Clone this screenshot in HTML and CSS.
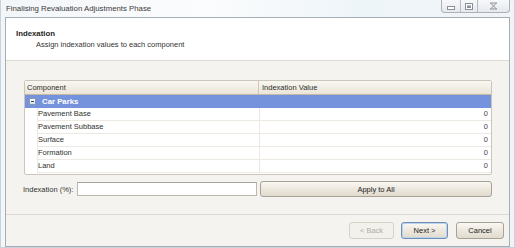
FILE: index.html
```html
<!DOCTYPE html>
<html>
<head>
<meta charset="utf-8">
<link rel="stylesheet" href="styles.css">
</head>
<body>
<div class="window">
  <div class="titlebar">
    <span class="title">Finalising Revaluation Adjustments Phase</span>
    <div class="caption-btns">
      <div class="cb cb-min"><svg width="8" height="4" viewBox="0 0 8 4"><rect x="0.5" y="0.5" width="7" height="3" fill="#fff" stroke="#8a9099"/></svg></div>
      <div class="cb cb-max"><svg width="8" height="7" viewBox="0 0 8 7"><rect x="0.5" y="0.5" width="7" height="6" fill="#fff" stroke="#8a9099"/><rect x="2" y="2.5" width="4" height="2.5" fill="#8a9099"/></svg></div>
      <div class="cb cb-close"><svg width="9" height="8" viewBox="0 0 9 8"><path d="M1 1 H8 M1.5 1 L4.5 4 L7.5 1 M4.5 4 L1.5 7 M4.5 4 L7.5 7 M1 7 H8" fill="none" stroke="#8a9099" stroke-width="1"/></svg></div>
    </div>
  </div>
  <div class="client">
    <div class="header">
      <div class="h-title">Indexation</div>
      <div class="h-sub">Assign indexation values to each component</div>
    </div>
    <div class="content">
      <div class="grid">
        <div class="grid-head">
          <div class="col-a">Component</div>
          <div class="col-b">Indexation Value</div>
        </div>
        <div class="group-row">
          <span class="toggle"><span class="toggle-minus"></span></span>
          <span class="group-name">Car Parks</span>
        </div>
        <div class="rows">
          <div class="row"><div class="cell-a">Pavement Base</div><div class="cell-b">0</div></div>
          <div class="row"><div class="cell-a">Pavement Subbase</div><div class="cell-b">0</div></div>
          <div class="row"><div class="cell-a">Surface</div><div class="cell-b">0</div></div>
          <div class="row"><div class="cell-a">Formation</div><div class="cell-b">0</div></div>
          <div class="row"><div class="cell-a">Land</div><div class="cell-b">0</div></div>
        </div>
      </div>
      <div class="form-row">
        <label class="lbl">Indexation (%):</label>
        <div class="input"></div>
        <button class="btn btn-apply">Apply to All</button>
      </div>
    </div>
    <div class="footer">
      <button class="btn btn-nav btn-disabled">&lt; Back</button>
      <button class="btn btn-nav btn-default">Next &gt;</button>
      <button class="btn btn-nav btn-cancel">Cancel</button>
    </div>
  </div>
</div>
</body>
</html>
```
FILE: styles.css
```css
* { box-sizing: border-box; }
html, body { margin: 0; padding: 0; }
body {
  width: 515px;
  height: 248px;
  overflow: hidden;
  font-family: "Liberation Sans", Arial, sans-serif;
  font-size: 7.5px;
  color: #2f2f2f;
  background: #eef2f6;
}
.window {
  width: 515px;
  height: 248px;
  display: flex;
  flex-direction: column;
  padding: 0 4px 2px 4px;
  background: linear-gradient(90deg, #f3f6f9 0%, #fbfcfd 40%, #eef5f9 70%, #f1f4f7 100%);
  border: 1px solid #c9d2da;
  border-top: none;
}
.titlebar {
  height: 17px;
  display: flex;
  align-items: flex-start;
  justify-content: space-between;
  flex-shrink: 0;
}
.title {
  margin-top: 4px;
  margin-left: 1px;
  font-size: 7.8px;
  color: #3a3a3a;
}
.caption-btns {
  display: flex;
  height: 13px;
  border: 1px solid #a9b1ba;
  border-top: none;
  border-radius: 0 0 4px 4px;
  background: linear-gradient(#f7f8fa, #e6e9ed);
  overflow: hidden;
}
.cb {
  display: flex;
  align-items: center;
  justify-content: center;
}
.cb-min { width: 19px; border-right: 1px solid #b6bcc4; padding-top: 4px; }
.cb-max { width: 17px; border-right: 1px solid #b6bcc4; }
.cb-close { width: 31px; }
.client {
  flex: 1;
  display: flex;
  flex-direction: column;
  border: 1px solid #a7adb4;
  background: #f5f3ef;
}
.header {
  height: 43px;
  background: #fff;
  border-bottom: 1px solid #dcd9d2;
  padding: 11px 0 0 10px;
  flex-shrink: 0;
}
.h-title {
  font-weight: bold;
  font-size: 7.8px;
  color: #1e1e1e;
  line-height: 10px;
}
.h-sub {
  margin-top: 1px;
  margin-left: 20px;
  line-height: 10px;
  color: #333;
}
.content {
  flex: 1;
  padding: 19px 17px 0 18px;
}
.grid {
  border: 1px solid #cbc6bc;
  border-radius: 2px;
  background: #fff;
  height: 95px;
}
.grid-head {
  display: flex;
  height: 14px;
  background: linear-gradient(#f9f7f2, #ebe5d8);
  border-bottom: 1px solid #c2b9a6;
  line-height: 13px;
}
.col-a {
  width: 234px;
  padding-left: 2px;
  border-right: 1px solid #cfc6b4;
}
.col-b { flex: 1; padding-left: 3px; }
.group-row {
  height: 13px;
  background: #7592dc;
  display: flex;
  align-items: center;
  padding-left: 4px;
}
.toggle {
  width: 7px;
  height: 7px;
  border: 1px solid #8c98ad;
  background: linear-gradient(#ffffff, #d8dde6);
  display: flex;
  align-items: center;
  justify-content: center;
}
.toggle-minus {
  width: 3px;
  height: 1px;
  background: #3a4a6a;
}
.group-name {
  color: #fff;
  font-weight: bold;
  margin-left: 6px;
  font-size: 7.8px;
}
.rows { padding-left: 12px; }
.row {
  display: flex;
  height: 13px;
  line-height: 12px;
  border-bottom: 1px solid #ede9e2;
  border-left: 1px solid #ede9e2;
}
.cell-a {
  width: 222px;
  padding-left: 0;
  border-right: 1px solid #ede9e2;
}
.cell-b {
  flex: 1;
  text-align: right;
  padding-right: 3px;
  color: #444;
}
.form-row {
  display: flex;
  align-items: center;
  margin-top: 6px;
  height: 16px;
}
.lbl {
  width: 54px;
  margin-left: -1px;
  color: #333;
}
.input {
  width: 180px;
  height: 14px;
  background: #fff;
  border: 1px solid #bdb8ae;
  border-top-color: #a9a499;
}
.btn {
  font-family: "Liberation Sans", Arial, sans-serif;
  font-size: 7.5px;
  color: #222;
  border: 1px solid #a8a196;
  border-radius: 3px;
  background: linear-gradient(#faf8f4 0%, #ede8de 50%, #e1dace 100%);
  padding: 0;
}
.btn-apply {
  margin-left: 3px;
  flex: 1;
  height: 16px;
}
.footer {
  height: 32px;
  border-top: 1px solid #dedad2;
  display: flex;
  justify-content: flex-end;
  align-items: flex-start;
  padding: 7px 5px 0 0;
  flex-shrink: 0;
  margin-top: 17px;
}
.btn-nav {
  width: 47px;
  height: 17px;
  margin-left: 7px;
}
.btn-disabled {
  color: #b0aca6;
  border-color: #d6d2ca;
  background: #f3f1ec;
  width: 45px;
}
.btn-default {
  border-color: #6f8fb8;
  box-shadow: inset 0 0 0 1px #bcd3ec;
}
.btn-cancel { width: 48px; margin-left: 8px; }
```
